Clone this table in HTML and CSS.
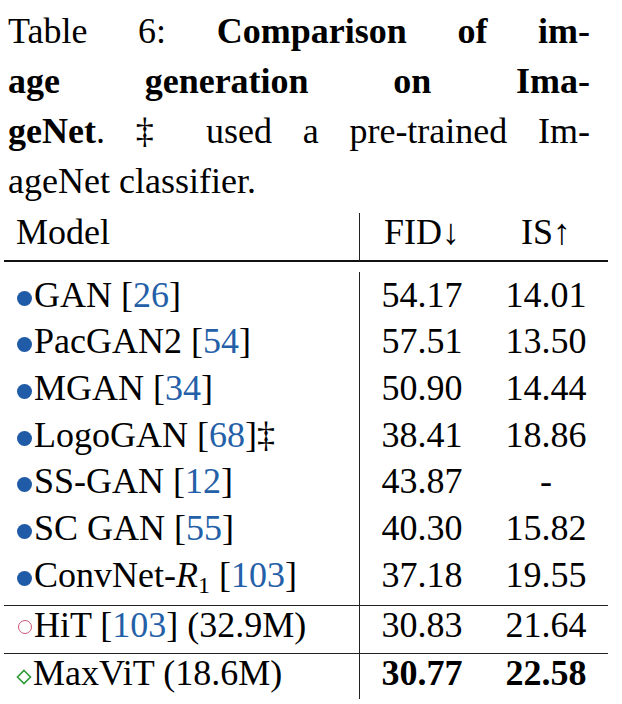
FILE: index.html
```html
<!DOCTYPE html>
<html>
<head>
<meta charset="utf-8">
<link rel="stylesheet" href="styles.css">
</head>
<body>
<div class="page">
  <p class="caption">
    <span class="ln just">Table 6: <b>Comparison of im-</b></span>
    <span class="ln just"><b>age generation on Ima-</b></span>
    <span class="ln just"><b>geNet</b>. ‡ used a pre-trained Im-</span>
    <span class="ln">ageNet classifier.</span>
  </p>
  <table class="results">
    <thead>
      <tr><th class="model">Model</th><th class="num">FID↓</th><th class="num">IS↑</th></tr>
    </thead>
    <tbody>
      <tr class="gap"><td></td><td></td><td></td></tr>
      <tr><td class="model"><span class="dot"></span>GAN <span class="ref">[<i class="cite">26</i>]</span></td><td class="num">54.17</td><td class="num">14.01</td></tr>
      <tr><td class="model"><span class="dot"></span>PacGAN2 <span class="ref">[<i class="cite">54</i>]</span></td><td class="num">57.51</td><td class="num">13.50</td></tr>
      <tr><td class="model"><span class="dot"></span>MGAN <span class="ref">[<i class="cite">34</i>]</span></td><td class="num">50.90</td><td class="num">14.44</td></tr>
      <tr><td class="model"><span class="dot"></span>LogoGAN <span class="ref">[<i class="cite">68</i>]</span>‡</td><td class="num">38.41</td><td class="num">18.86</td></tr>
      <tr><td class="model"><span class="dot"></span>SS-GAN <span class="ref">[<i class="cite">12</i>]</span></td><td class="num">43.87</td><td class="num">-</td></tr>
      <tr><td class="model"><span class="dot"></span>SC GAN <span class="ref">[<i class="cite">55</i>]</span></td><td class="num">40.30</td><td class="num">15.82</td></tr>
      <tr class="last"><td class="model"><span class="dot"></span>ConvNet-<i class="math">R</i><sub>1</sub> <span class="ref">[<i class="cite">103</i>]</span></td><td class="num">37.18</td><td class="num">19.55</td></tr>
      <tr class="sep"><td class="model"><span class="ring"></span>HiT <span class="ref">[<i class="cite">103</i>]</span> (32.9M)</td><td class="num">30.83</td><td class="num">21.64</td></tr>
      <tr class="sep best"><td class="model"><svg class="diamond" viewBox="0 0 16 16" width="16" height="16"><path d="M8 1.5 L14.5 8 L8 14.5 L1.5 8 Z" fill="none" stroke="#2e9a36" stroke-width="1.6"/></svg>MaxViT (18.6M)</td><td class="num strong">30.77</td><td class="num strong">22.58</td></tr>
    </tbody>
  </table>
</div>
</body>
</html>
```

FILE: styles.css
```css
html, body {
  margin: 0;
  padding: 0;
  background: #ffffff;
}

.page {
  width: 622px;
  font-family: "Liberation Serif";
}

.caption {
  margin: 0;
  padding: 6px 32px 0 8px;
  font-family: "Liberation Serif";
  font-size: 36px;
  line-height: 50px;
}

.caption b {
  font-weight: bold;
}

.ln {
  display: block;
}

.just {
  text-align: justify;
  text-align-last: justify;
}

.results {
  margin: 7px 0 0 4px;
  width: 604px;
  border-collapse: separate;
  border-spacing: 0;
  font-family: "Liberation Serif";
  font-size: 36px;
}

.results th,
.results td {
  padding: 0;
  line-height: 38px;
  font-weight: normal;
  white-space: nowrap;
  vertical-align: top;
}

.results th {
  padding-bottom: 9px;
  border-bottom: 2px solid #111;
}

.results th.model {
  text-align: left;
  padding-left: 12px;
  width: 343px;
  border-right: 1.5px solid #222;
}

.results .num {
  text-align: center;
  width: 124px;
}

.results td.model {
  padding-left: 12px;
  border-right: 1.5px solid #222;
}

.results tbody td {
  line-height: 46.67px;
}

.results tr.gap td {
  height: 9.5px;
  line-height: 0;
  border: none;
}

.results tr.last td {
  padding-bottom: 6.5px;
}

.results tr.sep td {
  border-top: 1.5px solid #222;
  line-height: 38px;
  padding-bottom: 9px;
}

.results tr.best td {
  padding-bottom: 7.5px;
}

.results td.strong {
  font-weight: bold;
}

.cite {
  font-style: normal;
  color: #2460a8;
}

.math {
  font-style: italic;
}

sub {
  font-size: 24px;
  line-height: 0;
  vertical-align: -6px;
}

.dot {
  display: inline-block;
  width: 15px;
  height: 15px;
  border-radius: 50%;
  background: #1f5ba6;
  margin: 0 2px 0 1px;
  vertical-align: 1px;
}

.ring {
  display: inline-block;
  width: 12px;
  height: 12px;
  border-radius: 50%;
  border: 1.5px solid #d05676;
  margin: 0 2px 0 2px;
  vertical-align: 3px;
}

.diamond {
  display: inline-block;
  margin: 0 1px 0 0;
  vertical-align: 0;
}
```
